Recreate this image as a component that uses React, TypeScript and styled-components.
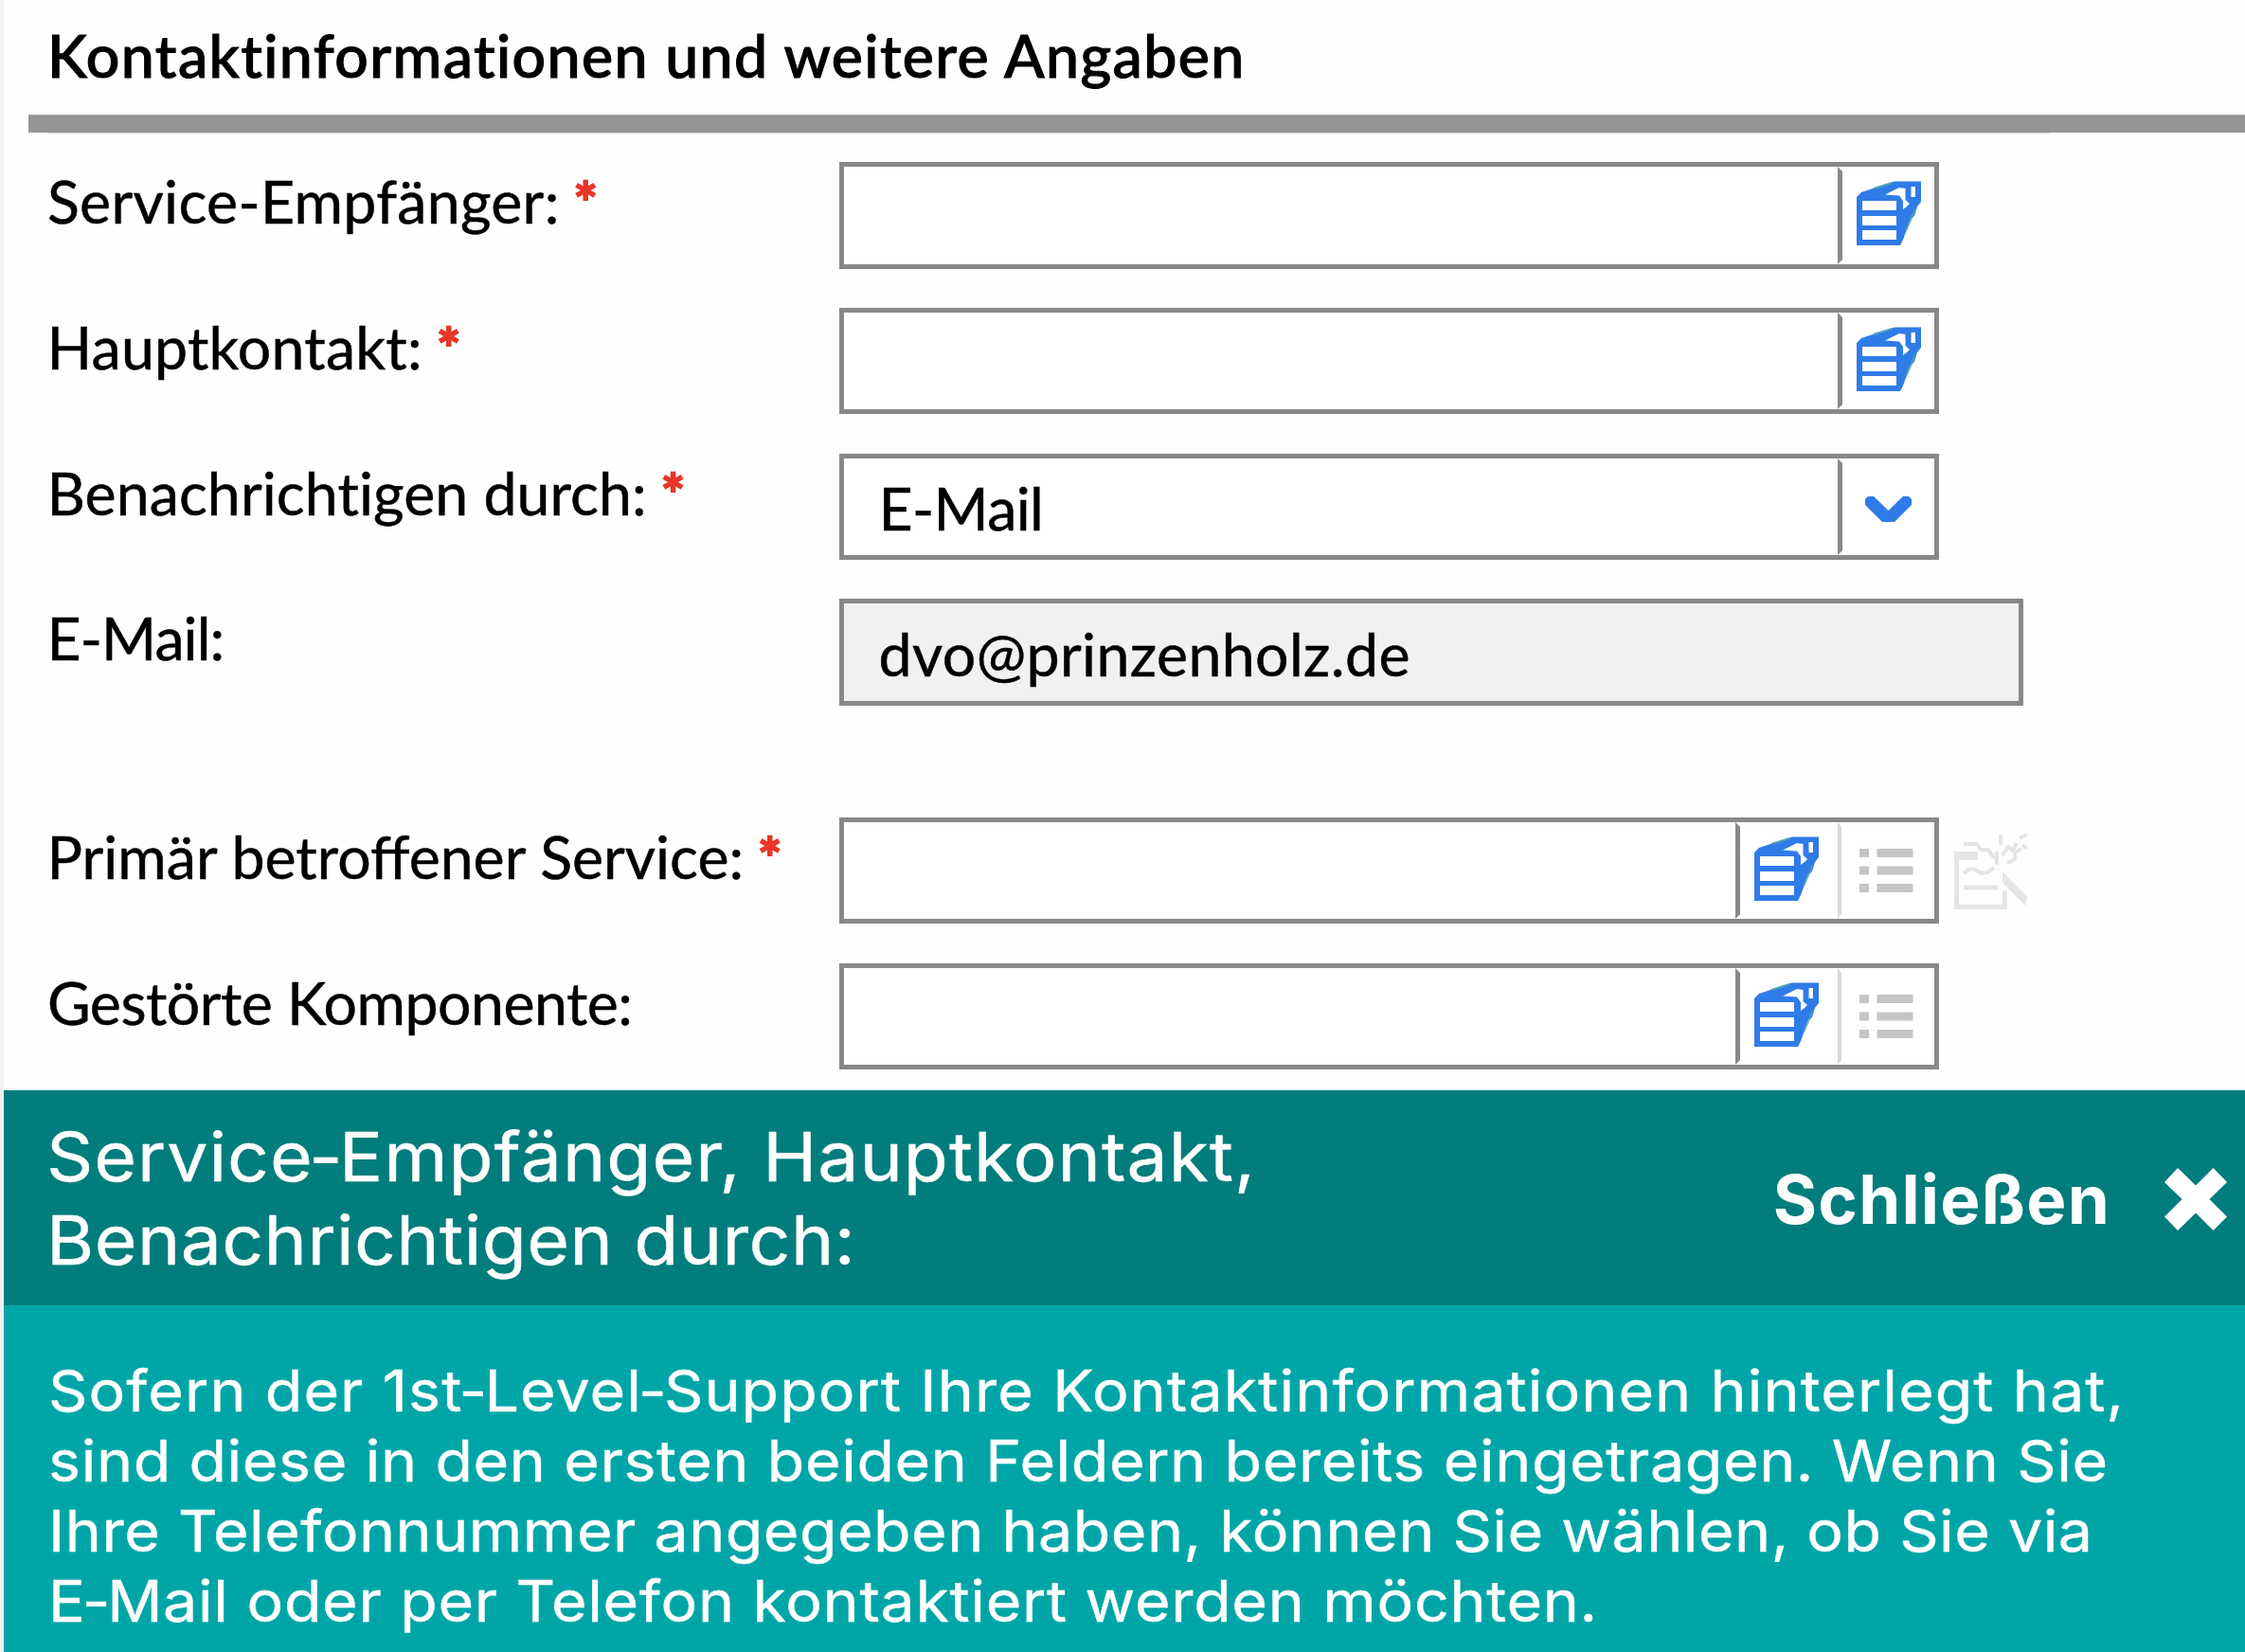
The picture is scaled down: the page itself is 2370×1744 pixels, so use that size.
import React from 'react';
import styled, { createGlobalStyle } from 'styled-components';

const GlobalStyle = createGlobalStyle`
  *, *::before, *::after { box-sizing: border-box; }
  body { margin: 0; background: #fefefe; }
`;

const Page = styled.main`
  display: flex;
  flex-direction: column;
  width: 2370px;
  height: 1744px;
  overflow: hidden;
  border-left: 4px solid #f1f1f1;
  background: #fefefe;
  color: #000;
  font-family: Lato, 'Liberation Sans', sans-serif;
  font-size: 62.6px;
`;

const Header = styled.header`
  height: 121px;
  padding: 17px 0 0 46px;
`;

const Heading = styled.h1`
  margin: 0;
  font-size: 62.6px;
  font-weight: 500;
  line-height: 82px;
  letter-spacing: 1.39px;
  white-space: nowrap;
  -webkit-text-stroke: 1.1px currentColor;
`;

const Rule = styled.div`
  height: 19px;
  margin-left: 25.5px;
  flex-shrink: 0;
  background: #959595;
  border-top: 1px solid #a5a5a5;
`;

const RuleShadow = styled.div`
  width: 2114px;
  height: 1px;
  margin-left: 46px;
  flex-shrink: 0;
  background: #d9d9d9;
`;

const Form = styled.form`
  display: flex;
  flex-direction: column;
  height: 1010px;
  flex-shrink: 0;
  padding-top: 30px;
`;

const Row = styled.div<{ $gapAfter?: boolean }>`
  display: grid;
  grid-template-columns: 882px auto auto;
  justify-content: start;
  align-items: start;
  height: 153.8px;
  flex-shrink: 0;
  margin-bottom: ${(p) => (p.$gapAfter ? '76.6px' : '0')};
`;

const Label = styled.label<{ $tracking: number; $indent: number }>`
  padding: 1px 0 0 ${(p) => p.$indent}px;
  line-height: 80px;
  white-space: nowrap;
  letter-spacing: ${(p) => p.$tracking}px;
  -webkit-text-stroke: 0.5px currentColor;
`;

const Required = styled.span`
  margin-left: 15px;
  color: #e8362a;
  font-size: 60px;
  font-weight: 700;
  letter-spacing: 0;
  -webkit-text-stroke: 2px currentColor;
`;

const Field = styled.div<{ $readOnly?: boolean }>`
  display: flex;
  width: ${(p) => (p.$readOnly ? 1249.5 : 1161)}px;
  height: 112.6px;
  border: 5px solid #888;
  background: ${(p) => (p.$readOnly ? '#f1f1f1' : '#fff')};
`;

const Value = styled.div<{ $tracking?: number }>`
  flex: 1;
  align-self: center;
  padding: 2px 0 0 36.5px;
  letter-spacing: ${(p) => p.$tracking ?? 0}px;
  line-height: 80px;
  -webkit-text-stroke: 0.5px currentColor;
`;

const FieldButton = styled.div<{ $wide?: boolean; $light?: boolean; $x: number; $y: number }>`
  width: ${(p) => (p.$wide ? 108 : 102)}px;
  padding: ${(p) => p.$y}px 0 0 ${(p) => p.$x}px;
  border: 5px solid transparent;
  border-right: 0;
  border-left: ${(p) => (p.$light ? '4px solid #d9d9d9' : '5px solid #888')};
`;

const Icon = styled.svg`
  display: block;
  overflow: visible;
`;

const EditIcon = styled(Icon)`
  margin: 17px 0 0 16px;
`;

const Banner = styled.section`
  display: flex;
  align-items: flex-start;
  justify-content: space-between;
  height: 227px;
  flex-shrink: 0;
  padding: 26px 19px 0 44.5px;
  background: #007d7c;
  color: #fff;
  font-family: Inter, 'Liberation Sans', sans-serif;
`;

const BannerTitle = styled.h2`
  margin: 0;
  font-size: 71.8px;
  font-weight: 400;
  line-height: 88px;
`;

const Line = styled.span<{ $tracking: number }>`
  display: block;
  width: max-content;
  white-space: nowrap;
  letter-spacing: ${(p) => p.$tracking}px;
  transform: scaleX(1.07);
  transform-origin: left;
  -webkit-text-stroke: 0.4px currentColor;
`;

const Hyphen = styled.span`
  margin: 0 -0.06em;
`;

const Close = styled.div`
  display: flex;
  align-items: center;
  gap: 57px;
  height: 178px;
  font-size: 70.8px;
  font-weight: 700;
  letter-spacing: 1.2px;
`;

const Body = styled.p`
  flex: 1;
  margin: 0;
  padding: 54px 0 0 46.5px;
  background: #00a6a7;
  color: #fff;
  font-family: Inter, 'Liberation Sans', sans-serif;
  font-size: 60.3px;
  line-height: 74px;
`;

const BLUE = '#2f7be8';

const BinderIcon = () => (
  <Icon width="69" height="69" viewBox="0 0 69 69">
    <path
      fill={BLUE}
      fillRule="evenodd"
      d="M0 17L5 12L20 7L40 0.5H68V22L64 27L61 37L57 40L49 62L46 68H0ZM6 21V31H42V21ZM6 37V47H42V37ZM6 52V62H42V52ZM57.5 6V17H62V6ZM30 14.5L45 15.5L49 21V30L53 27L56 24L51.5 20V8L45 7Z"
    />
    <path d="M18 8L38 2M62 30L52 52" stroke="#4fa3ae" strokeWidth="2.5" opacity="0.7" fill="none" />
  </Icon>
);

const ListIcon = () => (
  <Icon width="57" height="46" viewBox="0 0 57 46" fill="#c5c5c5">
    {[0, 18.5, 37].map((y) => (
      <React.Fragment key={y}>
        <rect x="0" y={y} width="10" height="9" />
        <rect x="18.5" y={y} width="38" height="9" />
      </React.Fragment>
    ))}
  </Icon>
);

const ChevronIcon = () => (
  <Icon width="49" height="27" viewBox="0 0 49 27" fill={BLUE}>
    <path d="M0 3L3 0H9L24.5 15L40 0H46L49 3V9L31 27H18L0 9Z" />
  </Icon>
);

const CloseIcon = () => (
  <Icon width="66" height="66" viewBox="0 0 66 66" fill="#fff">
    <path d="M14 0L33 18.5L51.5 0L66 15L47.5 33L66 51.5L51.5 66L33 47.5L14 66L0 51.5L18.5 33L0 15Z" />
  </Icon>
);

const SketchIcon = () => (
  <EditIcon width="78" height="81" viewBox="0 0 78 81" fill="none" stroke="#e5e5e5">
    <path strokeWidth="5" d="M2.5 19V77.5H53.5V60M10 57H46" />
    <path strokeWidth="9" d="M0 23.5H25" />
    <path fill="#e5e5e5" stroke="none" d="M51 40L77 67L75 76L51 52Z" />
    <path
      strokeWidth="4"
      d="M10 11H24L28 17H36L40 23L46 28M10 42L15 38L21 37L28 42L35 41L42 36M49 1V12M45 19V33M51 23L57 14L62 18L66 10M56 31L64 27V20L71 16M69 5L77 1M72 12L77 16"
    />
  </EditIcon>
);

const BinderButton = ({ wide }: { wide?: boolean }) => (
  <FieldButton $wide={wide} $x={14.5} $y={10}>
    <BinderIcon />
  </FieldButton>
);

const ListButton = () => (
  <FieldButton $light $x={18.5} $y={23.5}>
    <ListIcon />
  </FieldButton>
);

export default function App() {
  return (
    <>
      <GlobalStyle />
      <Page>
        <Header>
          <Heading>Kontaktinformationen und weitere Angaben</Heading>
        </Header>
        <Rule />
        <RuleShadow />
        <Form>
          <Row>
            <Label $indent={46} $tracking={0.3}>
              Service-Empfänger:<Required>*</Required>
            </Label>
            <Field>
              <Value />
              <BinderButton />
            </Field>
          </Row>
          <Row>
            <Label $indent={45.5} $tracking={0.23}>
              Hauptkontakt:<Required>*</Required>
            </Label>
            <Field>
              <Value />
              <BinderButton />
            </Field>
          </Row>
          <Row>
            <Label $indent={45.5} $tracking={0.08}>
              Benachrichtigen durch:<Required>*</Required>
            </Label>
            <Field>
              <Value $tracking={-0.64}>E-Mail</Value>
              <FieldButton $x={24} $y={35}>
                <ChevronIcon />
              </FieldButton>
            </Field>
          </Row>
          <Row $gapAfter>
            <Label $indent={45.5} $tracking={-0.9}>
              E-Mail:
            </Label>
            <Field $readOnly>
              <Value $tracking={0.4}>dvo@prinzenholz.de</Value>
            </Field>
          </Row>
          <Row>
            <Label $indent={45.5} $tracking={0}>
              Primär betroffener Service:<Required>*</Required>
            </Label>
            <Field>
              <Value />
              <BinderButton wide />
              <ListButton />
            </Field>
            <SketchIcon />
          </Row>
          <Row>
            <Label $indent={46} $tracking={-0.5}>
              Gestörte Komponente:
            </Label>
            <Field>
              <Value />
              <BinderButton wide />
              <ListButton />
            </Field>
          </Row>
        </Form>
        <Banner>
          <BannerTitle>
            <Line $tracking={0.95}>
              Service<Hyphen>-</Hyphen>Empfänger, Hauptkontakt,
            </Line>
            <Line $tracking={0.39}>Benachrichtigen durch:</Line>
          </BannerTitle>
          <Close>
            Schließen
            <CloseIcon />
          </Close>
        </Banner>
        <Body>
          <Line $tracking={1.01}>
            Sofern der 1st<Hyphen>-</Hyphen>Level<Hyphen>-</Hyphen>Support Ihre Kontaktinformationen hinterlegt hat,
          </Line>
          <Line $tracking={0.57}>sind diese in den ersten beiden Feldern bereits eingetragen. Wenn Sie</Line>
          <Line $tracking={0.46}>Ihre Telefonnummer angegeben haben, können Sie wählen, ob Sie via</Line>
          <Line $tracking={0.65}>
            E<Hyphen>-</Hyphen>Mail oder per Telefon kontaktiert werden möchten.
          </Line>
        </Body>
      </Page>
    </>
  );
}
